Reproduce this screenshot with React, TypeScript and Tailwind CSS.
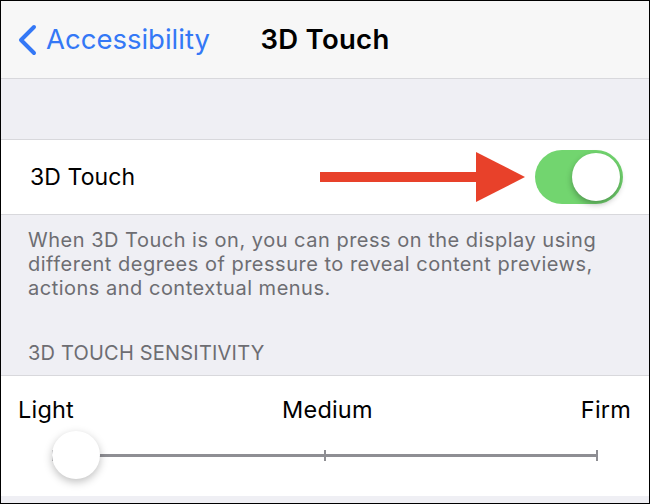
import React from "react";

export default function App() {
  const font = { fontFamily: "Inter, 'Noto Sans', sans-serif" };
  return (
    <div
      className="w-[650px] h-[504px] border border-black overflow-hidden flex flex-col bg-[#efeff4] text-black"
      style={font}
    >
      {/* Nav bar */}
      <div className="h-[78px] shrink-0 bg-[#f7f7f7] border-b border-[#d8d8dc] grid grid-cols-[1fr_auto_1fr] items-center">
        <div className="flex items-center pl-[15px] gap-[8px] text-[#3478f6]">
          <svg width="22" height="32" viewBox="0 0 22 32" className="shrink-0">
            <path d="M18 3 L5 16 L18 29" fill="none" stroke="#3478f6" strokeWidth="4" strokeLinecap="round" strokeLinejoin="round" />
          </svg>
          <span className="text-[27.5px] leading-none tracking-[0px]">Accessibility</span>
        </div>
        <div className="text-[27.5px] font-semibold leading-none tracking-[0.3px]">3D Touch</div>
        <div />
      </div>

      {/* spacer */}
      <div className="h-[61px] shrink-0 border-b border-[#d8d8dc]" />

      {/* Toggle row */}
      <div className="h-[75px] shrink-0 bg-white border-b border-[#d8d8dc] flex items-center pl-[29px] pr-[26px]">
        <span className="text-[23px] leading-none tracking-[0.1px]">3D Touch</span>
        <svg width="205" height="50" viewBox="0 0 205 50" className="ml-auto mr-[10px]">
          <rect x="0" y="20" width="157" height="10" fill="#e8412a" />
          <polygon points="156,0 205,25 156,50" fill="#e8412a" />
        </svg>
        <div className="w-[88px] h-[54px] rounded-full bg-[#72d56f] flex items-center justify-end pr-[3px]">
          <div className="w-[48px] h-[48px] rounded-full bg-white shadow-[0_3px_6px_rgba(0,0,0,0.3)]" />
        </div>
      </div>

      {/* Description + header */}
      <div className="shrink-0 pt-[13px] pl-[27px] pr-[40px] pb-[10px] text-[#6d6d72]">
        <p className="text-[20px] leading-[24px] tracking-[0.5px]">
          When 3D Touch is on, you can press on the display using different degrees of pressure to reveal content previews, actions and contextual menus.
        </p>
        <p className="mt-[41px] text-[20px] leading-[24px] tracking-[0.2px] uppercase">3D Touch Sensitivity</p>
      </div>

      {/* Slider section */}
      <div className="h-[121px] shrink-0 bg-white border-t border-[#d8d8dc]">
        <div className="flex justify-between items-center pl-[17px] pr-[18px] pt-[20px] text-[23.5px] leading-[28px] tracking-[0.2px]">
          <span>Light</span>
          <span>Medium</span>
          <span>Firm</span>
        </div>
        <div className="relative mx-[51px] mt-[7px] h-[48px] flex items-center">
          <div className="relative w-full h-[3px] bg-[#8e8e93]">
            <div className="absolute left-0 top-[-4px] w-[2px] h-[11px] bg-[#8e8e93]" />
            <div className="absolute left-1/2 top-[-4px] w-[2px] h-[11px] bg-[#8e8e93] -translate-x-1/2" />
            <div className="absolute right-0 top-[-4px] w-[2px] h-[11px] bg-[#8e8e93]" />
          </div>
          <div className="absolute left-0 top-0 w-[48px] h-[48px] rounded-full bg-white shadow-[0_3px_8px_rgba(0,0,0,0.25)]" />
        </div>
      </div>
    </div>
  );
}
